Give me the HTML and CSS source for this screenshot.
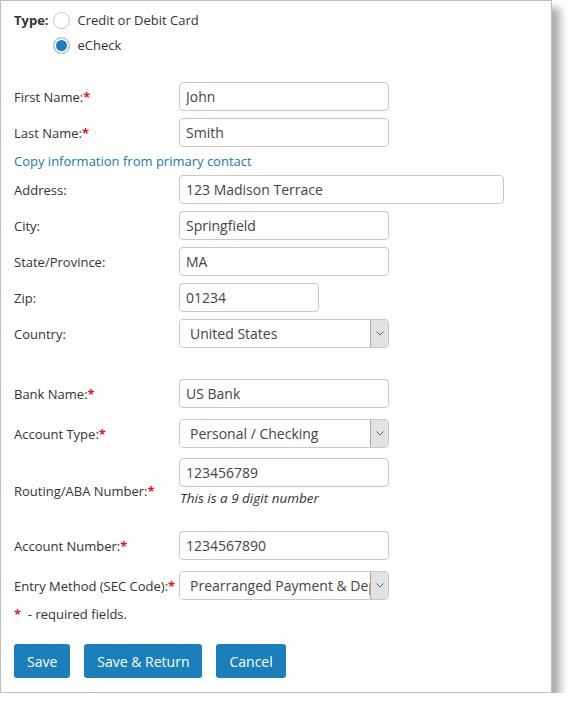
FILE: index.html
```html
<!DOCTYPE html>
<html lang="en-us">
<head>
<meta charset="UTF-8">
<title>Payment Method</title>
<link rel="stylesheet" href="styles.css">
</head>
<body>
<div class="panel">
  <div class="type-row">
    <span class="type-label">Type:</span>
    <div class="type-options">
      <label class="radio-line"><input type="radio" name="ptype" class="radio"> Credit or Debit Card</label>
      <label class="radio-line"><input type="radio" name="ptype" class="radio" checked> eCheck</label>
    </div>
  </div>

  <div class="row first">
    <label class="lbl">First Name:<span class="req">*</span></label>
    <input class="field w210" type="text" value="John">
  </div>
  <div class="row">
    <label class="lbl">Last Name:<span class="req">*</span></label>
    <input class="field w210" type="text" value="Smith">
  </div>
  <div class="copy-row"><a href="#" class="copy-link">Copy information from primary contact</a></div>
  <div class="row after-copy">
    <label class="lbl">Address:</label>
    <input class="field w325" type="text" value="123 Madison Terrace">
  </div>
  <div class="row">
    <label class="lbl">City:</label>
    <input class="field w210" type="text" value="Springfield">
  </div>
  <div class="row">
    <label class="lbl">State/Province:</label>
    <input class="field w210" type="text" value="MA">
  </div>
  <div class="row">
    <label class="lbl">Zip:</label>
    <input class="field w140" type="text" value="01234">
  </div>
  <div class="row">
    <label class="lbl">Country:</label>
    <div class="select-box">
      <select class="select"><option>United States</option></select>
      <span class="arrow"><svg width="8" height="5" viewBox="0 0 8 5"><path d="M0.5 0.5 L4 4 L7.5 0.5" fill="none" stroke="#666" stroke-width="1"/></svg></span>
    </div>
  </div>

  <div class="row bank first-bank">
    <label class="lbl">Bank Name:<span class="req">*</span></label>
    <input class="field w210" type="text" value="US Bank">
  </div>
  <div class="row bank">
    <label class="lbl">Account Type:<span class="req">*</span></label>
    <div class="select-box">
      <select class="select"><option>Personal / Checking</option></select>
      <span class="arrow"><svg width="8" height="5" viewBox="0 0 8 5"><path d="M0.5 0.5 L4 4 L7.5 0.5" fill="none" stroke="#666" stroke-width="1"/></svg></span>
    </div>
  </div>
  <div class="row bank routing">
    <label class="lbl lbl-low">Routing/ABA Number:<span class="req">*</span></label>
    <div class="field-col">
      <input class="field w210" type="text" value="123456789">
      <div class="hint">This is a 9 digit number</div>
    </div>
  </div>
  <div class="row bank">
    <label class="lbl">Account Number:<span class="req">*</span></label>
    <input class="field w210" type="text" value="1234567890">
  </div>
  <div class="row bank">
    <label class="lbl">Entry Method (SEC Code):<span class="req">*</span></label>
    <div class="select-box">
      <select class="select"><option>Prearranged Payment &amp; Deposit</option></select>
      <span class="arrow"><svg width="8" height="5" viewBox="0 0 8 5"><path d="M0.5 0.5 L4 4 L7.5 0.5" fill="none" stroke="#666" stroke-width="1"/></svg></span>
    </div>
  </div>
  <div class="required-note"><span class="req">*</span> &nbsp;- required fields.</div>

  <div class="buttons">
    <button class="btn">Save</button>
    <button class="btn">Save &amp; Return</button>
    <button class="btn">Cancel</button>
  </div>
</div>
</body>
</html>
```

FILE: styles.css
```css
body {
  margin: 0;
  background: #fff;
  color: #333;
  font-family: "Open Sans", Arial, sans-serif;
  font-size: 13px;
}

.panel {
  width: 537px;
  height: 691px;
  border: 1px solid #bdbdbd;
  box-shadow: 8px 8px 8px rgba(0, 0, 0, 0.33);
  padding: 0 0 0 13px;
}

/* type selector */
.type-row {
  display: flex;
  padding-top: 11px;
}

.type-label {
  font-weight: bold;
  line-height: 17px;
  margin-right: 4px;
}

.type-options {
  display: flex;
  flex-direction: column;
  gap: 8px;
}

.radio-line {
  display: flex;
  align-items: center;
  line-height: 17px;
  gap: 8px;
}

.radio {
  appearance: none;
  -webkit-appearance: none;
  margin: 0;
  width: 17px;
  height: 17px;
  border: 1px solid #c4c4c4;
  border-radius: 50%;
  background: #fff;
  box-sizing: border-box;
}

.radio:checked {
  background: #1a7fbd;
  box-shadow: inset 0 0 0 2px #fff;
}

/* rows */
.row {
  display: flex;
  align-items: center;
  margin-top: 7px;
}

.row.first {
  margin-top: 28px;
}

.row.after-copy {
  margin-top: 0;
}

.lbl {
  width: 165px;
  flex: none;
}

.req {
  color: #e8141b;
  font-weight: bold;
}

.field {
  height: 29px;
  box-sizing: border-box;
  border: 1px solid #c9c9c9;
  border-radius: 4px;
  padding: 0 6px;
  font-family: "Open Sans", Arial, sans-serif;
  font-size: 14px;
  color: #444;
  margin: 0;
}

.w210 { width: 210px; }
.w325 { width: 325px; }
.w140 { width: 140px; }

.copy-row {
  height: 28px;
  display: flex;
  align-items: center;
}

.copy-link {
  color: #1d78b5;
  text-decoration: none;
}

.select-box {
  display: flex;
  width: 210px;
  height: 29px;
  box-sizing: border-box;
  border: 1px solid #c9c9c9;
  border-radius: 4px;
  overflow: hidden;
}

.select {
  appearance: none;
  -webkit-appearance: none;
  flex: 1;
  min-width: 0;
  border: none;
  background: #fff;
  padding: 0 0 0 10px;
  font-family: "Open Sans", Arial, sans-serif;
  font-size: 14px;
  color: #444;
  outline: none;
}

.arrow {
  width: 17px;
  flex: none;
  background: #e2e2e2;
  border-left: 1px solid #a8a8a8;
  display: flex;
  align-items: center;
  justify-content: center;
}

/* bank section */
.row.bank {
  margin-top: 11px;
}

.row.first-bank {
  margin-top: 31px;
}

.row.routing {
  margin-top: 10px;
  margin-bottom: 23px;
}

.lbl-low {
  margin-top: 16px;
}

.field-col {
  display: flex;
  flex-direction: column;
}

.hint {
  font-style: italic;
  font-size: 13.5px;
  line-height: 19px;
  margin-top: 2px;
  padding-left: 1px;
}

.required-note {
  margin-top: 5px;
  line-height: 18px;
}

.buttons {
  display: flex;
  gap: 14px;
  margin-top: 21px;
}

.btn {
  height: 34px;
  border: none;
  border-radius: 3px;
  background: #1a7fba;
  color: #fff;
  font-family: "Open Sans", Arial, sans-serif;
  font-size: 14px;
  padding: 0 13px;
}
```
